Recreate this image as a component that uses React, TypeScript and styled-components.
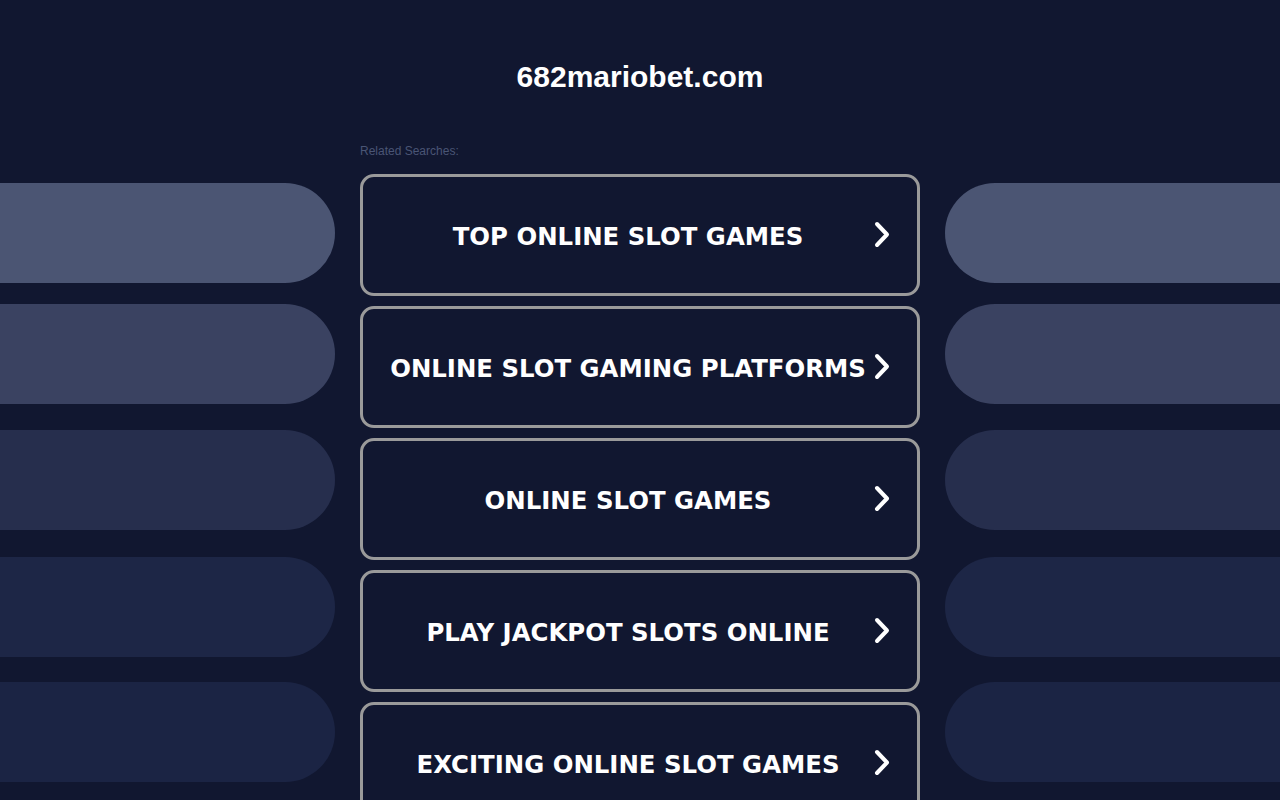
import React from "react";
import styled, { createGlobalStyle } from "styled-components";

const GlobalStyle = createGlobalStyle`
  html, body {
    margin: 0;
    padding: 0;
    background: #111730;
    overflow: hidden;
  }
`;

const Page = styled.div`
  width: 1280px;
  height: 800px;
  background: #111730;
  overflow: hidden;
`;

const Header = styled.div`
  height: 140px;
  display: flex;
  justify-content: center;
  padding-top: 61px;
  box-sizing: border-box;
`;

const Title = styled.h1`
  margin: 0;
  font-family: "Liberation Sans", Arial, sans-serif;
  font-size: 30px;
  line-height: 32px;
  font-weight: 700;
  color: #ffffff;
`;

const Main = styled.div`
  display: grid;
  grid-template-columns: 335px 560px 335px;
  column-gap: 25px;
`;

const Side = styled.div`
  display: flex;
  flex-direction: column;
  padding-top: 43px;
`;

const Pill = styled.div<{ $shade: string; $side: "left" | "right"; $space: number; $dots?: boolean }>`
  height: 100px;
  margin-top: ${(p) => p.$space}px;
  background-color: ${(p) => p.$shade};
  border-radius: ${(p) => (p.$side === "left" ? "0 50px 50px 0" : "50px 0 0 50px")};
  ${(p) =>
    p.$dots
      ? `background-image: radial-gradient(rgba(255,255,255,0.05) 0.5px, transparent 0.7px);
         background-size: 2px 2px;`
      : ""}
`;

const Center = styled.div`
  display: flex;
  flex-direction: column;
`;

const Label = styled.div`
  font-family: "Liberation Sans", Arial, sans-serif;
  font-size: 12px;
  line-height: 20px;
  color: #4a5575;
  padding-top: 1px;
  margin-bottom: 13px;
`;

const List = styled.div`
  display: flex;
  flex-direction: column;
  gap: 10px;
`;

const Button = styled.a`
  position: relative;
  height: 122px;
  box-sizing: border-box;
  border: 3px solid #9a9a9a;
  border-radius: 14px;
  display: flex;
  align-items: center;
  padding: 2px 24px 0 0;
  text-decoration: none;
  cursor: pointer;
`;

const ButtonText = styled.span`
  flex: 1;
  text-align: center;
  font-family: "DejaVu Sans", Verdana, sans-serif;
  font-size: 24.4px;
  font-weight: 700;
  color: #ffffff;
`;

const Arrow = styled.svg`
  position: absolute;
  right: 26px;
  top: 50%;
  transform: translateY(-50%);
`;

const Chevron = () => (
  <Arrow width="20" height="30" viewBox="0 0 20 30" fill="none">
    <path
      d="M6 4 L16 14.5 L6 25"
      stroke="#ffffff"
      strokeWidth="4"
      strokeLinecap="round"
      strokeLinejoin="round"
    />
  </Arrow>
);

const pills = [
  { shade: "#4b5573", space: 0 },
  { shade: "#3a4261", space: 21 },
  { shade: "#262e4d", space: 26 },
  { shade: "#1d2646", space: 27 },
  { shade: "#1b2444", space: 25 },
];

const searches = [
  "TOP ONLINE SLOT GAMES",
  "ONLINE SLOT GAMING PLATFORMS",
  "ONLINE SLOT GAMES",
  "PLAY JACKPOT SLOTS ONLINE",
  "EXCITING ONLINE SLOT GAMES",
];

export default function App() {
  return (
    <Page>
      <GlobalStyle />
      <Header>
        <Title>682mariobet.com</Title>
      </Header>
      <Main>
        <Side>
          {pills.map((p, i) => (
            <Pill key={i} $shade={p.shade} $space={p.space} $side="left" $dots={i >= 3} />
          ))}
        </Side>
        <Center>
          <Label>Related Searches:</Label>
          <List>
            {searches.map((t) => (
              <Button key={t}>
                <ButtonText>{t}</ButtonText>
                <Chevron />
              </Button>
            ))}
          </List>
        </Center>
        <Side>
          {pills.map((p, i) => (
            <Pill key={i} $shade={p.shade} $space={p.space} $side="right" $dots={i >= 3} />
          ))}
        </Side>
      </Main>
    </Page>
  );
}
